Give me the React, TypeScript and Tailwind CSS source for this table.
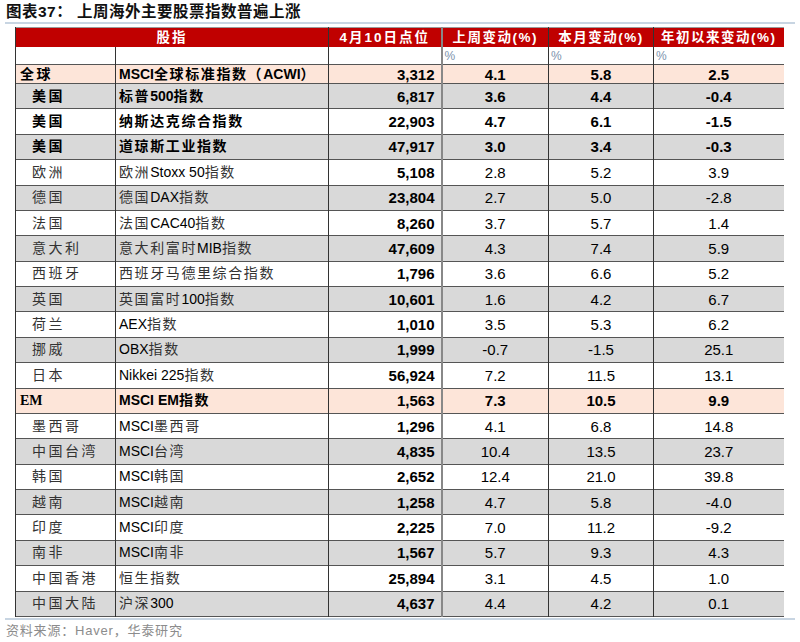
type Row = {
  region: string;
  name: string;
  point: string;
  week: string;
  month: string;
  ytd: string;
  bg: "peach" | "gray" | "white";
  bold?: boolean;
  indent?: boolean;
  short?: boolean;
};

const rows: Row[] = [
  { region: "全球", name: "MSCI全球标准指数（ACWI）", point: "3,312", week: "4.1", month: "5.8", ytd: "2.5", bg: "peach", bold: true, short: true },
  { region: "美国", name: "标普500指数", point: "6,817", week: "3.6", month: "4.4", ytd: "-0.4", bg: "gray", bold: true, indent: true },
  { region: "美国", name: "纳斯达克综合指数", point: "22,903", week: "4.7", month: "6.1", ytd: "-1.5", bg: "white", bold: true, indent: true },
  { region: "美国", name: "道琼斯工业指数", point: "47,917", week: "3.0", month: "3.4", ytd: "-0.3", bg: "gray", bold: true, indent: true },
  { region: "欧洲", name: "欧洲Stoxx 50指数", point: "5,108", week: "2.8", month: "5.2", ytd: "3.9", bg: "white", indent: true },
  { region: "德国", name: "德国DAX指数", point: "23,804", week: "2.7", month: "5.0", ytd: "-2.8", bg: "gray", indent: true },
  { region: "法国", name: "法国CAC40指数", point: "8,260", week: "3.7", month: "5.7", ytd: "1.4", bg: "white", indent: true },
  { region: "意大利", name: "意大利富时MIB指数", point: "47,609", week: "4.3", month: "7.4", ytd: "5.9", bg: "gray", indent: true },
  { region: "西班牙", name: "西班牙马德里综合指数", point: "1,796", week: "3.6", month: "6.6", ytd: "5.2", bg: "white", indent: true },
  { region: "英国", name: "英国富时100指数", point: "10,601", week: "1.6", month: "4.2", ytd: "6.7", bg: "gray", indent: true },
  { region: "荷兰", name: "AEX指数", point: "1,010", week: "3.5", month: "5.3", ytd: "6.2", bg: "white", indent: true },
  { region: "挪威", name: "OBX指数", point: "1,999", week: "-0.7", month: "-1.5", ytd: "25.1", bg: "gray", indent: true },
  { region: "日本", name: "Nikkei 225指数", point: "56,924", week: "7.2", month: "11.5", ytd: "13.1", bg: "white", indent: true },
  { region: "EM", name: "MSCI EM指数", point: "1,563", week: "7.3", month: "10.5", ytd: "9.9", bg: "peach", bold: true },
  { region: "墨西哥", name: "MSCI墨西哥", point: "1,296", week: "4.1", month: "6.8", ytd: "14.8", bg: "white", indent: true },
  { region: "中国台湾", name: "MSCI台湾", point: "4,835", week: "10.4", month: "13.5", ytd: "23.7", bg: "gray", indent: true },
  { region: "韩国", name: "MSCI韩国", point: "2,652", week: "12.4", month: "21.0", ytd: "39.8", bg: "white", indent: true },
  { region: "越南", name: "MSCI越南", point: "1,258", week: "4.7", month: "5.8", ytd: "-4.0", bg: "gray", indent: true },
  { region: "印度", name: "MSCI印度", point: "2,225", week: "7.0", month: "11.2", ytd: "-9.2", bg: "white", indent: true },
  { region: "南非", name: "MSCI南非", point: "1,567", week: "5.7", month: "9.3", ytd: "4.3", bg: "gray", indent: true },
  { region: "中国香港", name: "恒生指数", point: "25,894", week: "3.1", month: "4.5", ytd: "1.0", bg: "white", indent: true },
  { region: "中国大陆", name: "沪深300", point: "4,637", week: "4.4", month: "4.2", ytd: "0.1", bg: "gray", indent: true },
];

const bgClass = {
  peach: "bg-[#fde5d9]",
  gray: "bg-[#d9d9d9]",
  white: "bg-white",
};

const sans = "font-['Liberation_Sans','Noto_Sans_CJK_SC',sans-serif]";
const serif = "font-['Liberation_Serif','Noto_Sans_CJK_SC',serif]";
const CJK = /[\u3000-\u9fff\uff00-\uffef]/;

// Chinese runs in the source are set in a wider serif face, so space them out a little
function Spaced({ text, bold }: { text: string; bold?: boolean }) {
  const parts = text.match(/[\u3000-\u9fff\uff00-\uffef]+|[^\u3000-\u9fff\uff00-\uffef]+/g) || [];
  return (
    <>
      {parts.map((p, i) =>
        CJK.test(p) ? (
          <span key={i} className={`tracking-[1.6px] ${bold ? "" : "text-[#333]"}`}>
            {p}
          </span>
        ) : (
          <span key={i}>{p}</span>
        )
      )}
    </>
  );
}

export default function App() {
  return (
    <div className={`w-[800px] h-[642px] bg-white text-black ${sans}`}>
      {/* title */}
      <div className="px-[6px] pt-[2px] h-[22px] text-[15.5px] font-bold leading-[20px] text-[#111] tracking-[0.5px]">
        图表37：&nbsp;上周海外主要股票指数普遍上涨
      </div>
      <div className="mx-[5px] h-[2px] bg-[#c8d5e2]" />

      <div className="pl-[15px] pt-[3px]">
        <table className="table-fixed border-collapse w-[768px] text-[14px]">
          <colgroup>
            <col className="w-[100px]" />
            <col className="w-[213px]" />
            <col className="w-[113px]" />
            <col className="w-[107px]" />
            <col className="w-[105px]" />
            <col className="w-[130px]" />
          </colgroup>
          <thead>
            <tr className="h-[19px] bg-[#c00000] text-white font-bold border-t border-[#9a9a9a] text-[13.5px] leading-[17px] tracking-[2px]">
              <th colSpan={2} className="border-l border-[#333] font-bold">股指</th>
              <th className="border-l border-[#333] font-bold">4月10日点位</th>
              <th className="border-l-2 border-[#888] font-bold tracking-[1.5px]">上周变动(%)</th>
              <th className="border-l border-[#333] font-bold tracking-[1.5px]">本月变动(%)</th>
              <th className="border-l border-[#333] font-bold tracking-[1.5px]">年初以来变动(%)</th>
            </tr>
            <tr className="h-[18px] bg-white border-b border-[#555]">
              <td className="border-l border-[#333]" />
              <td className="border-l border-[#333]" />
              <td className="border-l border-[#333]" />
              <td className="border-l-2 border-[#888] text-[12px] leading-[12px] text-[#7d93ad] align-top pl-[2px] pt-[3px]">%</td>
              <td className="border-l border-[#333] text-[12px] leading-[12px] text-[#7d93ad] align-top pl-[2px] pt-[3px]">%</td>
              <td className="border-l border-[#333] text-[12px] leading-[12px] text-[#7d93ad] align-top pl-[2px] pt-[3px]">%</td>
            </tr>
          </thead>
          <tbody>
            {rows.map((r, i) => (
              <tr
                key={i}
                className={`${r.short ? "h-[19px]" : "h-[25.38px]"} ${bgClass[r.bg]} border-b border-[#555] leading-[17px]`}
              >
                <td
                  className={`border-l border-[#333] ${r.indent ? "pl-[16px]" : "pl-[4px]"} ${serif} ${r.bold ? "font-bold" : "text-[#333]"} ${CJK.test(r.region) ? "tracking-[2.5px]" : ""} whitespace-nowrap`}
                >
                  {r.region}
                </td>
                <td className={`border-l border-[#333] pl-[3px] whitespace-nowrap ${r.bold ? "font-bold" : ""}`}>
                  <Spaced text={r.name} bold={r.bold} />
                </td>
                <td className="border-l border-[#333] pr-[6px] text-right font-bold text-[15px]">{r.point}</td>
                <td className={`border-l-2 border-[#888] text-center text-[15px] ${r.bold ? "font-bold" : ""}`}>{r.week}</td>
                <td className={`border-l border-[#333] text-center text-[15px] ${r.bold ? "font-bold" : ""}`}>{r.month}</td>
                <td className={`border-l border-[#333] text-center text-[15px] ${r.bold ? "font-bold" : ""}`}>{r.ytd}</td>
              </tr>
            ))}
          </tbody>
        </table>
      </div>

      <div className="mx-[5px] mt-[1px] h-[2px] bg-[#c8d5e2]" />
      <div className="px-[6px] pt-[3px] text-[13px] leading-[16px] text-[#8c8c8c] tracking-[0.8px]">
        资料来源：Haver，华泰研究
      </div>
    </div>
  );
}
